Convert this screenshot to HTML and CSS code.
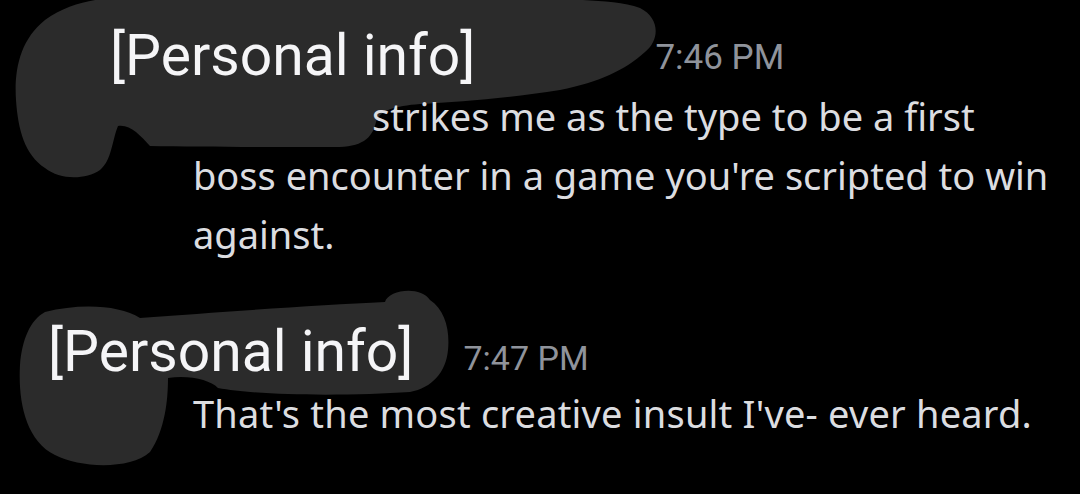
FILE: index.html
```html
<!DOCTYPE html>
<html>
<head>
<meta charset="utf-8">
<link rel="stylesheet" href="styles.css">
</head>
<body>
<div class="chat">
  <svg class="redact" width="1080" height="494" viewBox="0 0 1080 494" aria-hidden="true">
    <path d="M110,-2 L565,-2 C590,2 620,0 640,8 C660,18 660,40 645,52 C625,70 600,82 560,90 C510,98 460,102 420,104 C395,106 380,110 376,122 C372,140 360,148 330,147 C280,147 200,147 150,146 C140,135 130,124 118,126 C112,140 112,160 100,170 C85,180 60,180 45,168 C25,155 18,130 16,100 C14,70 20,40 45,20 C65,5 90,0 110,-2 Z"/>
    <path d="M45,312 C80,303 120,305 140,318 C220,312 320,305 385,302 C388,290 420,285 430,300 C445,310 450,330 448,350 C446,372 432,388 410,392 C350,396 260,396 218,388 C210,380 190,375 168,378 C168,400 165,430 150,452 C130,470 80,468 55,455 C25,440 18,400 20,365 C22,340 30,320 45,312 Z"/>
  </svg>

  <div class="message first">
    <div class="header header-one">
      <span class="name">[Personal info]</span>
      <span class="time time-one">7:46 PM</span>
    </div>
    <p class="text"><span class="hidden-word"></span>strikes me as the type to be a first boss encounter in a game you're scripted to win against.</p>
  </div>

  <div class="message second">
    <div class="header header-two">
      <span class="name">[Personal info]</span>
      <span class="time time-two">7:47 PM</span>
    </div>
    <p class="text text-two">That's the most creative insult I've- ever heard.</p>
  </div>
</div>
</body>
</html>
```

FILE: styles.css
```css
html, body {
  margin: 0;
  padding: 0;
  background: #000;
}
body {
  width: 1080px;
  height: 494px;
  overflow: hidden;
}
.chat {
  position: relative;
  width: 1080px;
  height: 494px;
  padding-top: 28px;
  box-sizing: border-box;
}
.redact {
  position: absolute;
  left: 0;
  top: 0;
  z-index: 0;
}
.redact path {
  fill: #2b2b2b;
}
.message {
  position: relative;
  z-index: 1;
}
.header {
  display: flex;
  align-items: flex-start;
}
.header-one {
  padding-left: 110px;
  gap: 180px;
}
.header-two {
  padding-left: 48px;
  gap: 50px;
}
.name {
  font-family: Roboto, "Liberation Sans", sans-serif;
  font-size: 57px;
  line-height: 56px;
  color: #f5f5f7;
}
.time {
  font-family: Roboto, "Liberation Sans", sans-serif;
  font-size: 35px;
  color: #8f939b;
}
.time-one {
  line-height: 59px;
}
.time-two {
  font-size: 34px;
  line-height: 68px;
}
.text {
  margin: 0;
  padding-left: 193px;
  width: 860px;
  font-family: "Noto Sans", "Open Sans", sans-serif;
  font-size: 38px;
  line-height: 59px;
  color: #dcdde0;
}
.hidden-word {
  display: inline-block;
  width: 179px;
}
.second {
  margin-top: 60px;
}
.second .text-two {
  margin-top: -8px;
  letter-spacing: 0.2px;
}
```
